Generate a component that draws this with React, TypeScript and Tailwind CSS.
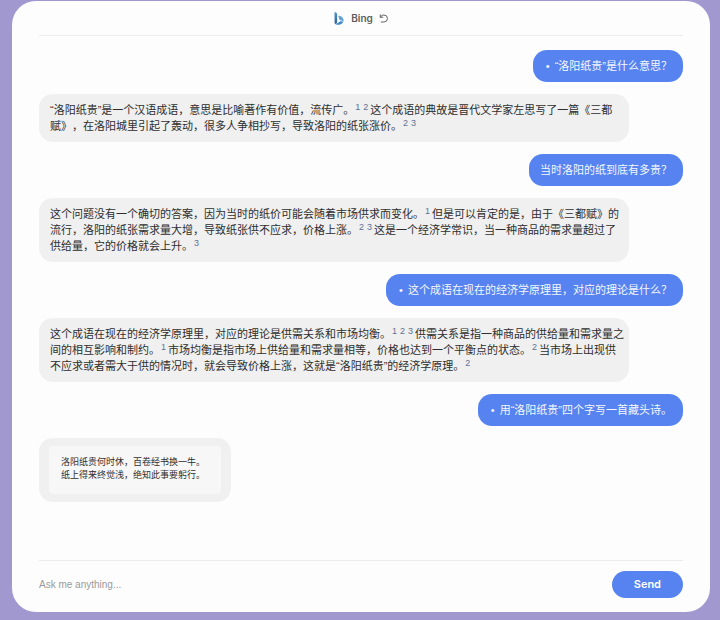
import { Fragment, useState } from "react";
import type { ReactNode } from "react";

type Part = string | number[];

type Message =
  | { id: number; from: "user"; text: string; bullet?: boolean }
  | { id: number; from: "bot"; parts: Part[] }
  | { id: number; from: "poem"; lines: string[] };

// number arrays are citation marks
const messages: Message[] = [
  { id: 1, from: "user", text: "“洛阳纸贵”是什么意思？", bullet: true },
  {
    id: 2,
    from: "bot",
    parts: [
      "“洛阳纸贵”是一个汉语成语，意思是比喻著作有价值，流传广。",
      [1, 2],
      "这个成语的典故是晋代文学家左思写了一篇《三都赋》，在洛阳城里引起了轰动，很多人争相抄写，导致洛阳的纸张涨价。",
      [2, 3],
    ],
  },
  { id: 3, from: "user", text: "当时洛阳的纸到底有多贵？" },
  {
    id: 4,
    from: "bot",
    parts: [
      "这个问题没有一个确切的答案，因为当时的纸价可能会随着市场供求而变化。",
      [1],
      "但是可以肯定的是，由于《三都赋》的流行，洛阳的纸张需求量大增，导致纸张供不应求，价格上涨。",
      [2, 3],
      "这是一个经济学常识，当一种商品的需求量超过了供给量，它的价格就会上升。",
      [3],
    ],
  },
  { id: 5, from: "user", text: "这个成语在现在的经济学原理里，对应的理论是什么？", bullet: true },
  {
    id: 6,
    from: "bot",
    parts: [
      "这个成语在现在的经济学原理里，对应的理论是供需关系和市场均衡。",
      [1, 2, 3],
      "供需关系是指一种商品的供给量和需求量之间的相互影响和制约。",
      [1],
      "市场均衡是指市场上供给量和需求量相等，价格也达到一个平衡点的状态。",
      [2],
      "当市场上出现供不应求或者需大于供的情况时，就会导致价格上涨，这就是“洛阳纸贵”的经济学原理。",
      [2],
    ],
  },
  { id: 7, from: "user", text: "用“洛阳纸贵”四个字写一首藏头诗。", bullet: true },
  {
    id: 8,
    from: "poem",
    lines: ["洛阳纸贵何时休，百卷经书换一牛。", "纸上得来终觉浅，绝知此事要躬行。"],
  },
];

function BingLogo() {
  return (
    <svg viewBox="0 0 28 38" className="h-[13px] w-[10px]" aria-hidden="true">
      <defs>
        <linearGradient id="stem" x1="0" y1="0" x2="0" y2="1">
          <stop offset="0" stopColor="#4d93c8" />
          <stop offset="1" stopColor="#2f5f9c" />
        </linearGradient>
        <linearGradient id="bowl" x1="0" y1="1" x2="1" y2="0">
          <stop offset="0" stopColor="#3f7fc4" />
          <stop offset="1" stopColor="#86c3e4" />
        </linearGradient>
      </defs>
      <path d="M1 1.5C1 .4 2.2-.1 3.2.6l3.6 2.2C8 3.600 8.500 4.600 8.500 6v24L5 36C2.500 35 1 33 1 30z" fill="url(#stem)" />
      <path
        d="M12.500 13.500c-.6-1.800.6-3 2.400-2.500C22 12.800 27.500 17 27.500 24c0 2.600-.8 4.800-2.200 6.600-1-3.400-3-5.200-6.300-6.400-2.200-.8-3.200-1.600-3.800-3.200z"
        fill="url(#bowl)"
      />
      <path d="M2 32c1.500 2.500 4.500 2.600 7 1.100l9-6c3.500 0 7 1.500 7.300 3.500-1.300 2-3.300 3.400-6.300 5-5 2.600-13.500 3.400-17-3.600z" fill="#4189c9" />
    </svg>
  );
}

function ResetIcon() {
  return (
    <svg viewBox="0 0 16 16" className="h-[9px] w-[9px]" fill="none" stroke="currentColor" strokeWidth="1.7" strokeLinecap="round" strokeLinejoin="round" aria-hidden="true">
      <path d="M2.200 1.400v4.400h4.600" />
      <path d="M2.600 5.400C4 3 6.200 1.800 8.800 1.800a6.200 6.200 0 0 1 0 12.400H4" />
    </svg>
  );
}

function Citations({ marks }: { marks: number[] }) {
  return (
    <sup className="mr-0.5 ml-px inline-flex gap-[3px] text-[9px]/[9px] text-[#5f7196]">
      {marks.map((mark) => (
        <a key={mark} href={`#source-${mark}`}>
          {mark}
        </a>
      ))}
    </sup>
  );
}

function BotBubble({ children }: { children: ReactNode }) {
  return <div className="w-fit max-w-11/12 self-start rounded-[14px] bg-[#f0f0f0] text-[#2e2e2e]">{children}</div>;
}

function MessageItem({ message }: { message: Message }) {
  if (message.from === "user") {
    return (
      <div className="flex w-fit self-end rounded-[14px] bg-[#5683f0] px-[11px] py-2 text-[#f4f8ff]">
        {message.bullet && <span className="w-[11px] pl-0.5">•</span>}
        <p>{message.text}</p>
      </div>
    );
  }

  if (message.from === "poem") {
    return (
      <BotBubble>
        <div className="px-[10px] py-2">
          <div className="rounded bg-[#f7f7f7] pt-[10px] pr-4 pb-3 pl-3 text-[9px]/[13px]">
            {message.lines.map((line) => (
              <p key={line}>{line}</p>
            ))}
          </div>
        </div>
      </BotBubble>
    );
  }

  return (
    <BotBubble>
      <p className="py-2 pr-1 pl-[11px]">
        {message.parts.map((part, i) => (
          <Fragment key={i}>{typeof part === "string" ? part : <Citations marks={part} />}</Fragment>
        ))}
      </p>
    </BotBubble>
  );
}

export default function App() {
  const [draft, setDraft] = useState("");

  return (
    <div className="flex min-h-screen bg-[#a298d0] pt-px pr-[10px] pb-2 pl-3 font-['Liberation_Sans','Noto_Sans_CJK_SC',sans-serif]">
      <div className="flex flex-1 flex-col rounded-3xl bg-[#fdfdfd] px-[27px]">
        <header className="flex h-[35px] items-center justify-center border-b border-[#ececec] text-[#5c5c5c]">
          <BingLogo />
          <h1 className="ml-[7px] font-['Inter',sans-serif] text-[10px] font-semibold">Bing</h1>
          <button type="button" aria-label="Reset conversation" className="ml-1.5">
            <ResetIcon />
          </button>
        </header>

        <main lang="zh-CN" className="flex flex-1 flex-col gap-3 pt-[14px] pb-4 text-[11px]/[16px] [text-spacing-trim:space-all]">
          {messages.map((message) => (
            <MessageItem key={message.id} message={message} />
          ))}
        </main>

        <form
          onSubmit={(e) => e.preventDefault()}
          className="flex items-center border-t border-[#ececec] pt-[10px] pb-[14px]"
        >
          <input
            type="text"
            aria-label="Message"
            value={draft}
            onChange={(e) => setDraft(e.target.value)}
            placeholder="Ask me anything..."
            className="min-w-0 flex-1 bg-transparent text-[10px] text-[#333] outline-none placeholder:text-[#9a9a9a]"
          />
          <button type="submit" className="h-[27px] rounded-full bg-[#5683f0] px-[22px] font-['Inter',sans-serif] text-[11px] font-semibold text-white">
            Send
          </button>
        </form>
      </div>
    </div>
  );
}
